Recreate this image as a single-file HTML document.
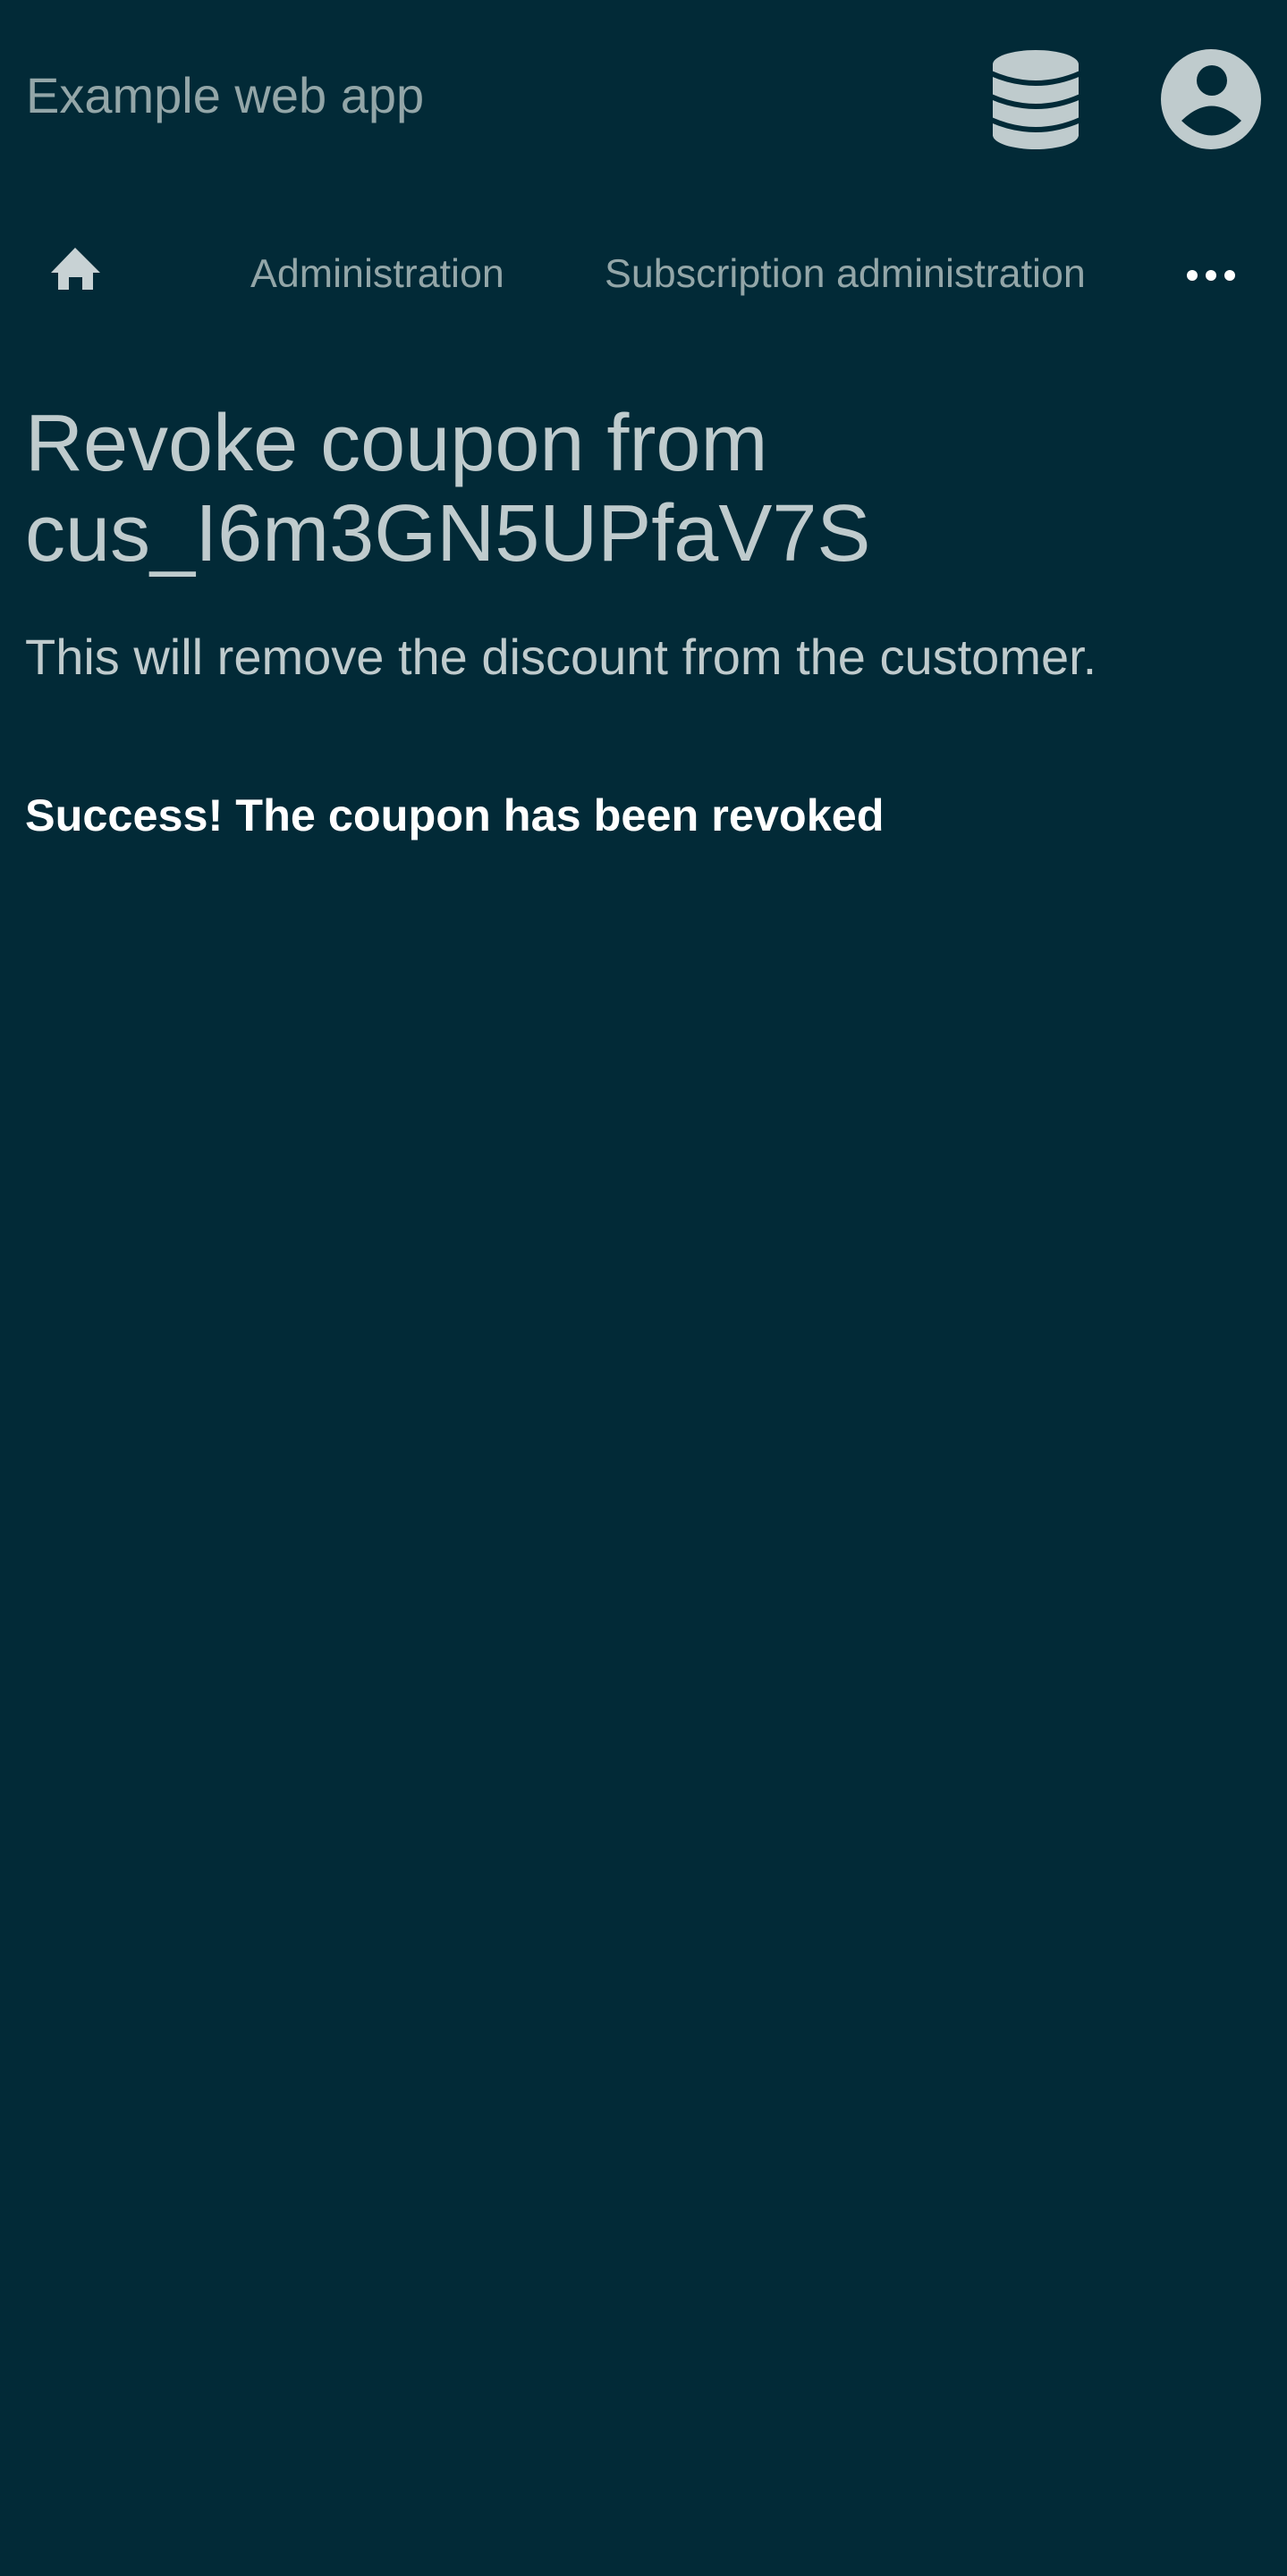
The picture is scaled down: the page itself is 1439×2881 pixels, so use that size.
<!DOCTYPE html>
<html><head><meta charset="utf-8"><style>
html,body{margin:0;padding:0;background:#022a37;width:1439px;height:2881px;overflow:hidden;font-family:"Liberation Sans",Arial,sans-serif}
.abs{position:absolute;white-space:nowrap}
</style></head><body>
<div class="abs" style="left:29px;top:72px;font-size:56px;line-height:70px;color:#93a6a8">Example web app</div>
<svg class="abs" style="left:0;top:0" width="1439" height="400">
 <g fill="#bfcbcd">
  <ellipse cx="1158" cy="72" rx="48" ry="16"/>
  <rect x="1110" y="72" width="96" height="80"/>
  <ellipse cx="1158" cy="151" rx="48" ry="16"/>
 </g>
 <g fill="none" stroke="#022a37" stroke-width="6">
  <path d="M1108 82 Q1158 104 1208 82"/>
  <path d="M1108 108 Q1158 130 1208 108"/>
  <path d="M1108 134 Q1158 156 1208 134"/>
 </g>
 <circle cx="1354" cy="111" r="56" fill="#bfcbcd"/>
 <circle cx="1355" cy="90" r="17" fill="#022a37"/>
 <path d="M1321 135 Q1355 102 1388 135 Q1355 168 1321 135 Z" fill="#022a37"/>
 <path d="M84 277 L112 305 L104 305 L104 324 L92 324 L92 310 L77 310 L77 324 L65 324 L65 305 L57 305 Z" fill="#c8d2d4"/>
 <circle cx="1333" cy="308" r="6" fill="#fff"/>
 <circle cx="1354" cy="308" r="6" fill="#fff"/>
 <circle cx="1375" cy="308" r="6" fill="#fff"/>
</svg>
<div class="abs" style="left:280px;top:279px;font-size:44.8px;line-height:54px;color:#93a6a8">Administration</div>
<div class="abs" style="left:676px;top:279px;font-size:44.8px;line-height:54px;color:#93a6a8">Subscription administration</div>
<div class="abs" style="left:28px;top:446px;font-size:90px;line-height:101px;color:#bfcbcd">Revoke coupon from<br>cus_I6m3GN5UPfaV7S</div>
<div class="abs" style="left:28px;top:703px;font-size:56px;line-height:64px;color:#bfcbcd">This will remove the discount from the customer.</div>
<div class="abs" style="left:28px;top:882px;font-size:50.4px;line-height:60px;color:#fff;font-weight:bold">Success! The coupon has been revoked</div>
</body></html>
